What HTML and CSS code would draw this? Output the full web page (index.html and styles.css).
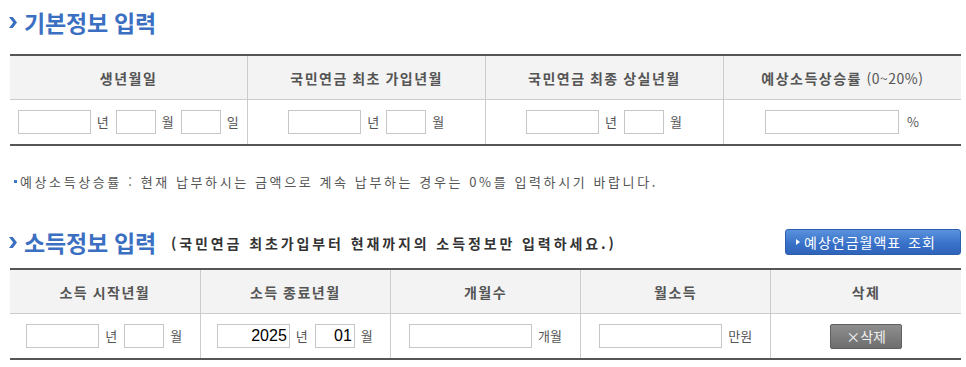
FILE: index.html
```html
<!DOCTYPE html>
<html lang="ko">
<head>
<meta charset="utf-8">
<title>기본정보 입력</title>
<link rel="stylesheet" href="styles.css">
</head>
<body>
<div class="page">
  <div class="title-row first">
    <h2 class="sec-title">
      <svg class="chev" width="8" height="11" viewBox="0 0 8 11"><polygon points="0,0 3.8,0 8,5.5 3.8,11 0,11 4.2,5.5" fill="#3b6fc2"/></svg>
      <span>기본정보 입력</span>
    </h2>
  </div>

  <table class="grid four">
    <thead>
      <tr>
        <th>생년월일</th>
        <th>국민연금 최초 가입년월</th>
        <th>국민연금 최종 상실년월</th>
        <th>예상소득상승률 <span class="thin">(0~20%)</span></th>
      </tr>
    </thead>
    <tbody>
      <tr>
        <td><div class="fields"><input class="in-y" type="text"><span class="lbl">년</span><input class="in-m" type="text"><span class="lbl">월</span><input class="in-m" type="text"><span class="lbl">일</span></div></td>
        <td><div class="fields"><input class="in-y" type="text"><span class="lbl">년</span><input class="in-m" type="text"><span class="lbl">월</span></div></td>
        <td><div class="fields"><input class="in-y" type="text"><span class="lbl">년</span><input class="in-m" type="text"><span class="lbl">월</span></div></td>
        <td><div class="fields wide"><input class="in-pct" type="text"><span class="lbl">%</span></div></td>
      </tr>
    </tbody>
  </table>

  <p class="note"><span class="bullet"></span>예상소득상승률 : 현재 납부하시는 금액으로 계속 납부하는 경우는 0%를 입력하시기 바랍니다.</p>

  <div class="title-row second">
    <h2 class="sec-title">
      <svg class="chev" width="8" height="11" viewBox="0 0 8 11"><polygon points="0,0 3.8,0 8,5.5 3.8,11 0,11 4.2,5.5" fill="#3b6fc2"/></svg>
      <span>소득정보 입력</span>
      <span class="sub">(국민연금 최초가입부터 현재까지의 소득정보만 입력하세요.)</span>
    </h2>
    <button class="btn-blue" type="button"><svg width="4" height="6" viewBox="0 0 4 6"><polygon points="0,0 4,3 0,6" fill="#fff"/></svg>예상연금월액표 조회</button>
  </div>

  <table class="grid five">
    <thead>
      <tr>
        <th>소득 시작년월</th>
        <th>소득 종료년월</th>
        <th>개월수</th>
        <th>월소득</th>
        <th>삭제</th>
      </tr>
    </thead>
    <tbody>
      <tr>
        <td><div class="fields"><input class="in-y" type="text"><span class="lbl">년</span><input class="in-m" type="text"><span class="lbl">월</span></div></td>
        <td><div class="fields"><input class="in-y val" type="text" value="2025"><span class="lbl">년</span><input class="in-m val" type="text" value="01"><span class="lbl">월</span></div></td>
        <td><div class="fields"><input class="in-long" type="text"><span class="lbl">개월</span></div></td>
        <td><div class="fields"><input class="in-long" type="text"><span class="lbl">만원</span></div></td>
        <td><div class="fields"><button class="btn-del" type="button">×삭제</button></div></td>
      </tr>
    </tbody>
  </table>
</div>
</body>
</html>
```

FILE: styles.css
```css
html, body {
  margin: 0;
  padding: 0;
  background: #fff;
}

body {
  font-family: "Noto Sans CJK KR", "Noto Sans", sans-serif;
  color: #555;
}

.page {
  width: 951px;
  padding: 0 0 0 10px;
}

.title-row {
  display: flex;
  align-items: center;
  justify-content: space-between;
}

.title-row.first {
  padding-top: 8px;
  height: 28px;
}

.title-row.second {
  margin-top: 38px;
  height: 26px;
}

.sec-title {
  margin: 0;
  display: flex;
  align-items: center;
  font-size: 23px;
  font-weight: bold;
  line-height: 26px;
  color: #3b6fc2;
  letter-spacing: -0.2px;
  white-space: nowrap;
}

.chev {
  display: block;
  margin-right: 7px;
  margin-left: -1px;
  margin-top: 1px;
}

.sub {
  font-size: 14px;
  color: #333;
  letter-spacing: 2.9px;
  word-spacing: 0;
  margin-left: 15px;
  margin-top: 1px;
}

.btn-blue {
  width: 176px;
  height: 26px;
  margin-right: 0;
  padding: 0 0 0 10px;
  display: flex;
  align-items: center;
  gap: 4px;
  border: 1px solid #2d5ea9;
  border-radius: 3px;
  background: linear-gradient(#5b93de, #3a72c9 55%, #2f64ba);
  color: #fff;
  font-family: "Noto Sans CJK KR", sans-serif;
  font-size: 14px;
  letter-spacing: 1px;
  word-spacing: 2px;
  cursor: pointer;
}

.grid {
  width: 951px;
  border-collapse: collapse;
  table-layout: fixed;
  border-top: 2px solid #555;
  border-bottom: 2px solid #555;
}

.grid.four {
  margin-top: 18px;
}

.grid.five {
  margin-top: 13px;
}

.grid th {
  height: 43px;
  padding: 0;
  background: #f3f3f3;
  border-bottom: 1px solid #cccccc;
  border-left: 1px solid #cccccc;
  font-size: 14px;
  font-weight: bold;
  color: #555;
  letter-spacing: 1.5px;
  word-spacing: -1px;
}

.grid td {
  height: 44px;
  padding: 0;
  border-left: 1px solid #cccccc;
}

.grid th:first-child,
.grid td:first-child {
  border-left: none;
}

.thin {
  font-weight: normal;
  letter-spacing: 0.5px;
  word-spacing: 0;
}

.fields {
  display: flex;
  justify-content: center;
  align-items: center;
  gap: 6px;
}

.fields.wide {
  gap: 8px;
}

.fields input {
  box-sizing: border-box;
  height: 24px;
  margin: 0;
  padding: 0 2px 0 0;
  border: 1px solid #c6c6c6;
  background: #fff;
  font-family: "Liberation Sans", Arial, sans-serif;
  font-size: 16px;
  color: #000;
  text-align: right;
}

.in-y { width: 73px; }
.in-m { width: 40px; }
.in-pct { width: 134px; }
.in-long { width: 123px; }

.lbl {
  font-size: 13px;
  color: #555;
  min-width: 13px;
  line-height: 18px;
}

.note {
  margin: 25px 0 0 4px;
  height: 20px;
  display: flex;
  align-items: center;
  font-size: 13px;
  color: #555;
  letter-spacing: 2.6px;
  word-spacing: 0;
}

.bullet {
  display: inline-block;
  width: 3px;
  height: 3px;
  background: #3b78c8;
  margin-right: 3px;
}

.btn-del {
  width: 72px;
  height: 25px;
  margin: 0;
  padding: 0;
  border: 1px solid #5f5f5f;
  border-radius: 2px;
  background: linear-gradient(#8e8e8e, #6e6e6e);
  color: #eeeeee;
  font-family: "Noto Sans CJK KR", sans-serif;
  font-size: 14px;
  cursor: pointer;
}
```
